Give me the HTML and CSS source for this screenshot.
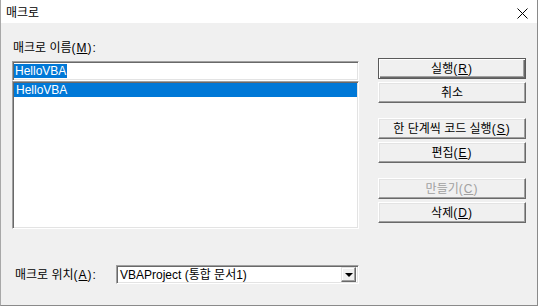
FILE: index.html
```html
<!DOCTYPE html>
<html lang="ko">
<head>
    <link rel="stylesheet" href="styles.css">
    <meta charset="UTF-8">
    <title>매크로</title>
</head>
<body>
    <!-- Ventana de macros -->
    <div class="window">
        <div class="titlebar">
            <span class="title">매크로</span>
            <svg class="close" width="11" height="11" viewBox="0 0 11 11">
                <path d="M0.5 0.5 L10.5 10.5 M10.5 0.5 L0.5 10.5" stroke="#000" stroke-width="1" fill="none"/>
            </svg>
        </div>

        <div class="content">
            <div class="main">
                <div class="left">
                    <div class="label">매크로 이름<span class="key">(<u>M</u>):</span></div>
                    <div class="textbox"><span class="sel">HelloVBA</span></div>
                    <div class="listbox">
                        <div class="item selected">HelloVBA</div>
                    </div>
                </div>

                <div class="buttons">
                    <button class="btn default">실행<span class="key">(<u>R</u>)</span></button>
                    <button class="btn">취소</button>
                    <button class="btn group">한 단계씩 코드 실행<span class="key">(<u>S</u>)</span></button>
                    <button class="btn">편집<span class="key">(<u>E</u>)</span></button>
                    <button class="btn group" disabled>만들기<span class="key">(<u>C</u>)</span></button>
                    <button class="btn">삭제<span class="key">(<u>D</u>)</span></button>
                </div>
            </div>

            <div class="bottom">
                <div class="label">매크로 위치<span class="key">(<u>A</u>):</span></div>
                <div class="combo">
                    <span class="combo-text">VBAProject (통합 문서1)</span>
                    <span class="drop"><span class="arrow"></span></span>
                </div>
            </div>
        </div>
    </div>
</body>
</html>
```

FILE: styles.css
```css
/* Dialogo estilo Windows */
* {
    box-sizing: border-box;
}

body {
    margin: 0;
    padding: 0;
    font-family: "Liberation Sans", "Noto Sans CJK KR", sans-serif;
    font-size: 12px;
    color: #000;
    background-color: #fff;
}

.window {
    width: 538px;
    height: 306px;
    border-right: 1px solid #8a8a8a;
    border-bottom: 1px solid #8a8a8a;
    border-left: 1px solid #a8a8a8;
    display: flex;
    flex-direction: column;
}

.titlebar {
    height: 23px;
    background-color: #fff;
    display: flex;
    align-items: center;
    justify-content: space-between;
    padding: 0 9px 0 5px;
}

.title {
    font-family: "Noto Sans CJK KR", sans-serif;
    font-size: 12px;
    line-height: 14px;
}

.close {
    margin-top: 3px;
}

.content {
    flex: 1;
    background-color: #f0f0f0;
    padding: 18px 0 0 11px;
}

.main {
    display: flex;
}

.left {
    width: 347px;
}

.label {
    line-height: 14px;
    height: 14px;
    padding-left: 1px;
}

/* letras de acceso un poco mas anchas */
.key {
    letter-spacing: 1px;
}

u {
    text-decoration: underline;
    text-underline-offset: 1px;
}

/* campos hundidos */
.textbox,
.listbox,
.combo {
    background-color: #fff;
    border: 1px solid;
    border-color: #a0a0a0 #fff #fff #a0a0a0;
    box-shadow: inset 1px 1px #696969, inset -1px -1px #e3e3e3;
}

.textbox {
    margin-top: 6px;
    height: 20px;
    padding: 2px 0 0 1px;
    line-height: 14px;
}

.sel {
    background-color: #0078d7;
    color: #fff;
    display: inline-block;
    height: 14px;
    padding: 0 1px;
}

.listbox {
    height: 148px;
    padding: 1px;
}

.item {
    height: 14px;
    line-height: 14px;
    padding-left: 2px;
}

.item.selected {
    background-color: #0078d7;
    color: #fff;
}

/* botones */
.buttons {
    margin-left: 19px;
    padding-top: 17px;
    display: flex;
    flex-direction: column;
    gap: 3px;
    width: 148px;
}

.btn {
    font-family: "Liberation Sans", "Noto Sans CJK KR", sans-serif;
    font-size: 12px;
    height: 21px;
    padding: 0;
    background-color: #f0f0f0;
    color: #000;
    border: 1px solid;
    border-color: #fff #696969 #696969 #fff;
    box-shadow: inset -1px -1px #a0a0a0, inset 1px 1px #e3e3e3;
    line-height: 14px;
}

.btn.default {
    border-color: #5a5a5a;
    box-shadow: inset 1px 1px #fff, inset -1px -1px #696969, inset -2px -2px #a0a0a0;
}

.btn.group {
    margin-top: 12px;
}

.btn:disabled {
    color: #a0a0a0;
}

/* parte de abajo */
.bottom {
    display: flex;
    align-items: center;
    margin-top: 36px;
    padding-left: 2px;
}

.bottom .label {
    width: 102px;
}

.combo {
    width: 243px;
    height: 19px;
    display: flex;
    align-items: center;
    justify-content: space-between;
    padding: 0 2px 0 3px;
}

.combo-text {
    line-height: 14px;
}

.drop {
    width: 15px;
    height: 15px;
    background-color: #f0f0f0;
    border: 1px solid;
    border-color: #e3e3e3 #696969 #696969 #e3e3e3;
    box-shadow: inset -1px -1px #a0a0a0, inset 1px 1px #fff;
    display: flex;
    align-items: center;
    justify-content: center;
}

.arrow {
    width: 0;
    height: 0;
    border-left: 4px solid transparent;
    border-right: 4px solid transparent;
    border-top: 4px solid #000;
}
```
